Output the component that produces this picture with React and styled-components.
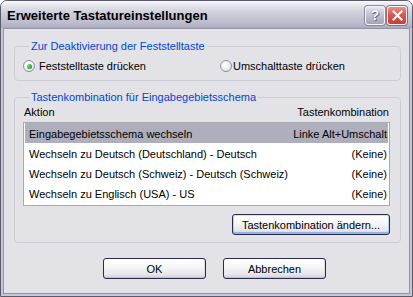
import React from "react";
import styled, { createGlobalStyle, css } from "styled-components";

const Global = createGlobalStyle`
  html, body { margin: 0; padding: 0; background: #ffffff; }
  body { font-family: "Liberation Sans", Arial, sans-serif; font-size: 11px; color: #000; }
  * { box-sizing: border-box; }
`;

const Window = styled.div`
  width: 413px;
  height: 297px;
  display: flex;
  flex-direction: column;
  background: #c6c6d4;
  border: 1px solid #5a5a6c;
  border-radius: 7px 7px 0 0;
  overflow: hidden;
`;

const TitleBar = styled.div`
  height: 27px;
  flex: none;
  display: flex;
  align-items: center;
  padding: 0 5px 0 6px;
  background: linear-gradient(
    to bottom,
    #fbfbfd 0%,
    #e8e8ef 14%,
    #d2d2de 40%,
    #c3c3d2 66%,
    #b9b9cb 86%,
    #a9a9bd 100%
  );
`;

const Title = styled.span`
  flex: 1;
  font: bold 13px "Liberation Sans", Arial, sans-serif;
  color: #000;
  padding-top: 2px;
`;

const CaptionButtons = styled.div`
  display: flex;
  gap: 2px;
  padding-top: 1px;
`;

const CaptionButton = styled.div`
  width: 20px;
  height: 19px;
  border-radius: 3px;
  border: 1px solid #f4f4f8;
  display: flex;
  align-items: center;
  justify-content: center;
  ${(p) =>
    p.$variant === "close"
      ? css`
          background: linear-gradient(to bottom, #e9928c 0%, #d65a52 45%, #c2423a 100%);
          box-shadow: 0 0 0 1px #9a6a70;
        `
      : css`
          background: linear-gradient(to bottom, #e6e6ef 0%, #bfc0d2 50%, #a3a4bc 100%);
          box-shadow: 0 0 0 1px #8a8aa0;
        `}
`;

const HelpGlyph = styled.span`
  font: bold 14px "Liberation Sans", Arial, sans-serif;
  color: #ffffff;
  text-shadow: 0 0 1px #50506a, 1px 1px 0 #70708a;
  line-height: 1;
`;

const Client = styled.div`
  flex: 1;
  margin: 0 2px 2px;
  background: #e3e2e7;
  border: 1px solid #9494a6;
  padding: 11px 8px 0 10px;
  display: flex;
  flex-direction: column;
`;

const Group = styled.fieldset`
  margin: ${(p) => (p.$first ? "0" : "10px 0 0")};
  padding: ${(p) => p.$pad};
  border: 1px solid #cdcdd6;
  border-radius: 4px;
  min-width: 0;
`;

const Legend = styled.legend`
  margin-left: 6px;
  padding: 0 2px;
  color: #0046d5;
  line-height: 13px;
  font-size: 11px;
`;

const RadioRow = styled.div`
  display: grid;
  grid-template-columns: 197px 1fr;
  align-items: center;
  height: 14px;
`;

const RadioLabel = styled.label`
  display: flex;
  align-items: center;
  gap: ${(p) => p.$gap}px;
  line-height: 13px;
`;

const RadioCircle = styled.span`
  width: 12px;
  height: 12px;
  border-radius: 50%;
  border: 1px solid #8e8f9f;
  background: radial-gradient(circle at 35% 35%, #ffffff 0%, #f0f0f4 50%, #d4d4dc 100%);
  display: flex;
  align-items: center;
  justify-content: center;
  flex: none;
`;

const RadioDot = styled.span`
  width: 5px;
  height: 5px;
  border-radius: 50%;
  background: radial-gradient(circle at 35% 35%, #7ee07e 0%, #2fa52f 60%, #1c7d1c 100%);
`;

const Header = styled.div`
  display: flex;
  justify-content: space-between;
  margin-top: 2px;
  padding: 0 1px;
  line-height: 13px;
`;

const List = styled.div`
  margin-top: 3px;
  height: 84px;
  border: 1px solid #a5acb5;
  background: #ffffff;
  padding: 0 1px 0 1px;
`;

const Row = styled.div`
  height: 20px;
  display: flex;
  align-items: center;
  justify-content: space-between;
  padding: 1px 1px 0 4px;
  background: ${(p) => (p.$selected ? "#aeaebc" : "transparent")};
  white-space: nowrap;
`;

const ButtonRow = styled.div`
  display: flex;
  justify-content: ${(p) => p.$justify || "flex-end"};
  gap: ${(p) => p.$gap || 0}px;
  margin-top: ${(p) => p.$top}px;
  padding-left: ${(p) => p.$left || 0}px;
`;

const Button = styled.button`
  width: ${(p) => p.$width}px;
  height: 21px;
  padding: 0;
  border: 1px solid #2b2b48;
  border-radius: 3px;
  font: 11px "Liberation Sans", Arial, sans-serif;
  color: #000;
  background: linear-gradient(to bottom, #ffffff 0%, #f6f6f8 45%, #e6e6ec 80%, #d2d2dc 100%);
  box-shadow: ${(p) =>
    p.$default
      ? "inset 0 1px 0 #cfe0fb, inset 0 -2px 0 #93b2ec, inset 1px 0 0 #b8cff5, inset -1px 0 0 #b8cff5"
      : "inset 0 -1px 0 #c2c2ce, inset -1px 0 0 #dadae2"};
`;

const rows = [
  ["Eingabegebietsschema wechseln", "Linke Alt+Umschalt"],
  ["Wechseln zu Deutsch (Deutschland) - Deutsch", "(Keine)"],
  ["Wechseln zu Deutsch (Schweiz) - Deutsch (Schweiz)", "(Keine)"],
  ["Wechseln zu Englisch (USA) - US", "(Keine)"],
];

export default function App() {
  return (
    <>
      <Global />
      <Window>
        <TitleBar>
          <Title>Erweiterte Tastatureinstellungen</Title>
          <CaptionButtons>
            <CaptionButton $variant="help">
              <HelpGlyph>?</HelpGlyph>
            </CaptionButton>
            <CaptionButton $variant="close">
              <svg width="11" height="11" viewBox="0 0 11 11">
                <path d="M1.5 1.5 L9.5 9.5 M9.5 1.5 L1.5 9.5" stroke="#ffffff" strokeWidth="2" strokeLinecap="square" />
              </svg>
            </CaptionButton>
          </CaptionButtons>
        </TitleBar>
        <Client>
          <Group $first $pad="6px 10px 7px 8px">
            <Legend>Zur Deaktivierung der Feststelltaste</Legend>
            <RadioRow>
              <RadioLabel $gap={4}>
                <RadioCircle>
                  <RadioDot />
                </RadioCircle>
                Feststelltaste drücken
              </RadioLabel>
              <RadioLabel $gap={1}>
                <RadioCircle />
                Umschalttaste drücken
              </RadioLabel>
            </RadioRow>
          </Group>
          <Group $pad="0 10px 7px 8px">
            <Legend>Tastenkombination für Eingabegebietsschema</Legend>
            <Header>
              <span>Aktion</span>
              <span>Tastenkombination</span>
            </Header>
            <List>
              {rows.map(([a, k], i) => (
                <Row key={a} $selected={i === 0}>
                  <span>{a}</span>
                  <span>{k}</span>
                </Row>
              ))}
            </List>
            <ButtonRow $top={8}>
              <Button $width={158} $default>
                Tastenkombination ändern...
              </Button>
            </ButtonRow>
          </Group>
          <ButtonRow $top={15} $justify="flex-start" $gap={17} $left={89}>
            <Button $width={103}>OK</Button>
            <Button $width={103}>Abbrechen</Button>
          </ButtonRow>
        </Client>
      </Window>
    </>
  );
}
